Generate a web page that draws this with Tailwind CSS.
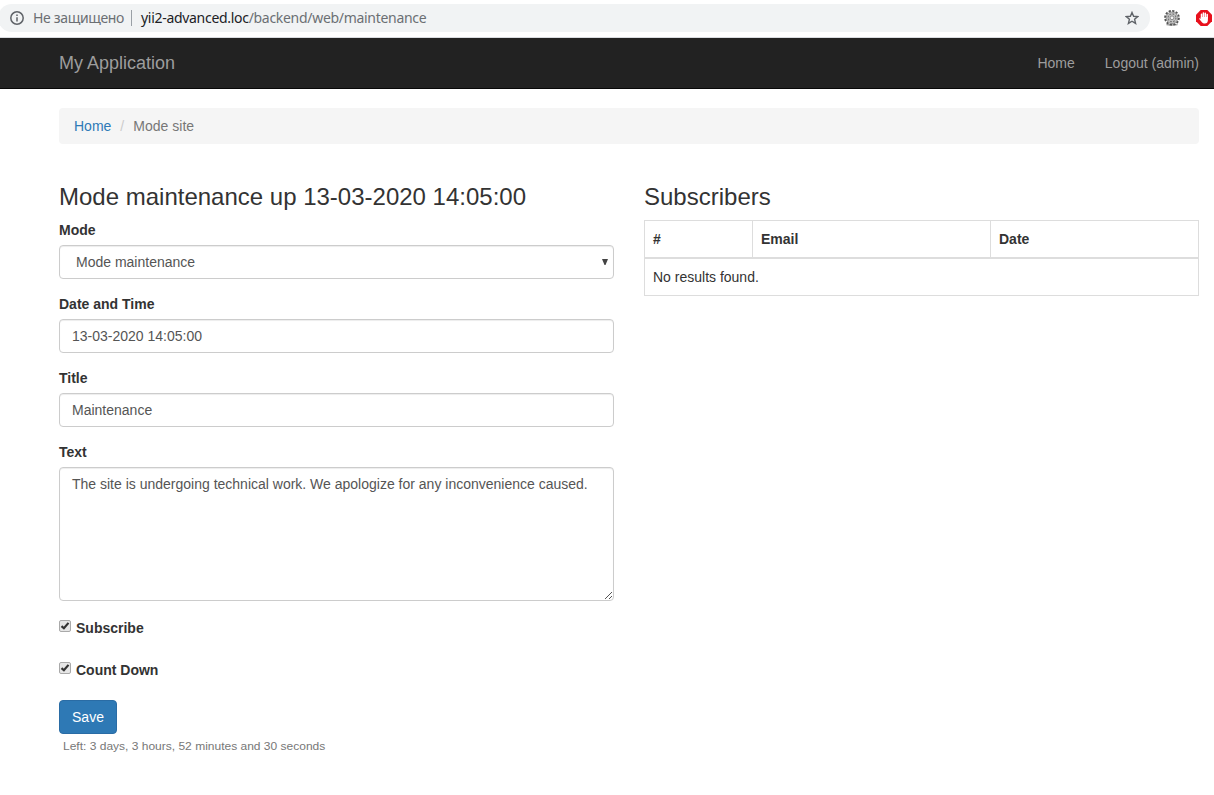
<!DOCTYPE html>
<html lang="en">
<head>
<meta charset="utf-8">
<title>Mode site</title>
<script src="https://cdn.jsdelivr.net/npm/@tailwindcss/browser@4"></script>
</head>
<body class="h-[795px] overflow-hidden bg-white font-['Liberation_Sans',Arial,sans-serif] text-sm leading-5 text-[#333]">

<!-- Browser toolbar -->
<div class="flex h-[38px] items-start border-b border-[#dadce0] pt-1 font-['Noto_Sans',sans-serif]">
  <div class="-ml-[2px] flex h-7 w-[1152px] shrink-0 items-center rounded-full bg-[#f1f3f4] pl-3 pr-[11px]">
    <svg class="mr-2 size-[14px] shrink-0" viewBox="0 0 14 14" fill="none" stroke="#5f6368" stroke-width="1.5"><circle cx="7" cy="7" r="6.2"/><path d="M7 6.2v4.2M7 3.4v1.5"/></svg>
    <span class="ml-px w-[92px] whitespace-nowrap text-sm tracking-[-0.34px] text-[#6b6f73]">Не защищено</span>
    <span class="ml-[6px] h-4 w-px bg-[#9aa0a6]"></span>
    <span class="ml-[9px] whitespace-nowrap text-sm tracking-[-0.3px] text-[#6b6f73]"><span class="text-[#202124]">yii2-advanced.loc</span>/backend/web/maintenance</span>
    <svg class="ml-auto size-[14px] shrink-0" viewBox="0 0 14 14" fill="none" stroke="#5f6368" stroke-width="1.4" stroke-linejoin="miter"><path d="M7 1.5 8.6 5.3 12.8 5.6 9.6 8.3 10.6 12.4 7 10.2 3.4 12.4 4.4 8.3 1.2 5.6 5.4 5.3Z"/></svg>
  </div>
  <svg class="ml-[14px] mt-[6px] size-4 shrink-0" viewBox="0 0 16 16">
    <ellipse cx="8" cy="14.8" rx="6" ry="1" fill="#aaa"/>
    <circle cx="8" cy="7.8" r="6.9" fill="none" stroke="#555" stroke-width="1.9" stroke-dasharray="2.2 1.413"/>
    <circle cx="8" cy="7.8" r="5.8" fill="#c4c4c4" stroke="#777" stroke-width=".7"/>
    <circle cx="8" cy="7.8" r="3.9" fill="none" stroke="#777" stroke-width="1.2" stroke-dasharray="1.8 1.263"/>
    <circle cx="8" cy="7.8" r="1.9" fill="#f2f2f2" stroke="#777" stroke-width=".8"/>
  </svg>
  <svg class="ml-4 mt-[6px] size-4 shrink-0" viewBox="0 0 16 16">
    <path d="M4.7 0h6.6L16 4.7v6.6L11.3 16H4.7L0 11.3V4.7Z" fill="#e8101c"/>
    <path d="M5.5 8.6V4.2M7.4 7.5V3M9.3 7.5V3.2M11.2 8V4.6" stroke="#fff" stroke-width="1.5" stroke-linecap="round"/>
    <path d="M4.8 7h7.1v3.2c0 2-1.2 3.3-3 3.3-1.7 0-2.6-.7-3.4-1.8L3 8.8c.3-.8 1-.8 1.8.1Z" fill="#fff"/>
  </svg>
</div>

<!-- Navigation -->
<nav class="flex h-[51px] items-center justify-between border-b border-[#080808] bg-[#222] pl-[59px] pr-[15px] text-[#9d9d9d]">
  <a class="text-lg leading-5">My Application</a>
  <div class="flex gap-[30px]"><a>Home</a><a>Logout (admin)</a></div>
</nav>

<main class="pl-[59px] pr-[15px] pt-[19px]">
  <div class="flex h-9 items-center rounded bg-[#f5f5f5] px-[15px]">
    <a class="text-[#2e7ab7]">Home</a><span class="w-[22px] pl-[9px] text-[#ccc]">/</span><span class="text-[#777]">Mode site</span>
  </div>

  <div class="grid grid-cols-2 gap-[30px] pt-10">
    <form>
      <h3 class="text-2xl leading-[26px]">Mode maintenance up 13-03-2020 14:05:00</h3>

      <div class="mt-[10px] font-bold">Mode</div>
      <div class="mt-[5px] flex h-[34px] items-center justify-between rounded border border-[#ccc] pl-4 pr-[5px] text-[#555] shadow-[inset_0_1px_1px_rgba(0,0,0,0.075)]">
        <span>Mode maintenance</span>
        <svg class="h-[6px] w-[6px]" viewBox="0 0 6 6"><path d="M0 0h6L3.5 6h-1Z" fill="#444"/></svg>
      </div>

      <div class="mt-[15px] font-bold">Date and Time</div>
      <div class="mt-[5px] flex h-[34px] items-center rounded border border-[#ccc] px-3 text-[#555] shadow-[inset_0_1px_1px_rgba(0,0,0,0.075)]">13-03-2020 14:05:00</div>

      <div class="mt-[15px] font-bold">Title</div>
      <div class="mt-[5px] flex h-[34px] items-center rounded border border-[#ccc] px-3 text-[#555] shadow-[inset_0_1px_1px_rgba(0,0,0,0.075)]">Maintenance</div>

      <div class="mt-[15px] font-bold">Text</div>
      <div class="mt-[5px] flex h-[134px] justify-between rounded border border-[#ccc] pl-3 text-[#555] shadow-[inset_0_1px_1px_rgba(0,0,0,0.075)]">
        <span class="pt-[6px]">The site is undergoing technical work. We apologize for any inconvenience caused.</span>
        <svg class="mb-px size-2 self-end" viewBox="0 0 8 8" shape-rendering="crispEdges" fill="#555"><path d="M0 7h1v1H0zM1 6h1v1H1zM2 5h1v1H2zM3 4h1v1H3zM4 3h1v1H4zM5 2h1v1H5zM6 1h1v1H6zM4 7h1v1H4zM5 6h1v1H5zM6 5h1v1H6z"/></svg>
      </div>

      <div class="mt-[17px] flex gap-[5px] font-bold">
        <svg class="mt-[2px] size-3" viewBox="0 0 12 12"><rect x=".5" y=".5" width="11" height="11" rx="1.5" fill="#e6e6e6" stroke="#a9a9a9"/><path d="M2.5 6.2 4.9 8.3 9.5 2.9" fill="none" stroke="#333" stroke-width="2.2"/></svg>
        <span>Subscribe</span>
      </div>
      <div class="mt-[22px] flex gap-[5px] font-bold">
        <svg class="mt-[2px] size-3" viewBox="0 0 12 12"><rect x=".5" y=".5" width="11" height="11" rx="1.5" fill="#e6e6e6" stroke="#a9a9a9"/><path d="M2.5 6.2 4.9 8.3 9.5 2.9" fill="none" stroke="#333" stroke-width="2.2"/></svg>
        <span>Count Down</span>
      </div>

      <button type="button" class="mt-5 block h-[34px] w-[58px] rounded border border-[#2a6ca5] bg-[#2e79b5] text-white">Save</button>
      <div class="ml-1 mt-[2px] w-fit origin-left scale-x-[1.073] text-[11.2px] leading-5 text-[#777]">Left: 3 days, 3 hours, 52 minutes and 30 seconds</div>
    </form>

    <section>
      <h3 class="text-2xl leading-[26px]">Subscribers</h3>
      <div class="mt-[10px] border border-[#ddd]">
        <div class="grid h-[38px] grid-cols-[108px_238px_1fr] border-b-2 border-[#ddd] font-bold">
          <div class="border-r border-[#ddd] p-2">#</div>
          <div class="border-r border-[#ddd] p-2">Email</div>
          <div class="p-2">Date</div>
        </div>
        <div class="p-2">No results found.</div>
      </div>
    </section>
  </div>
</main>
</body>
</html>
